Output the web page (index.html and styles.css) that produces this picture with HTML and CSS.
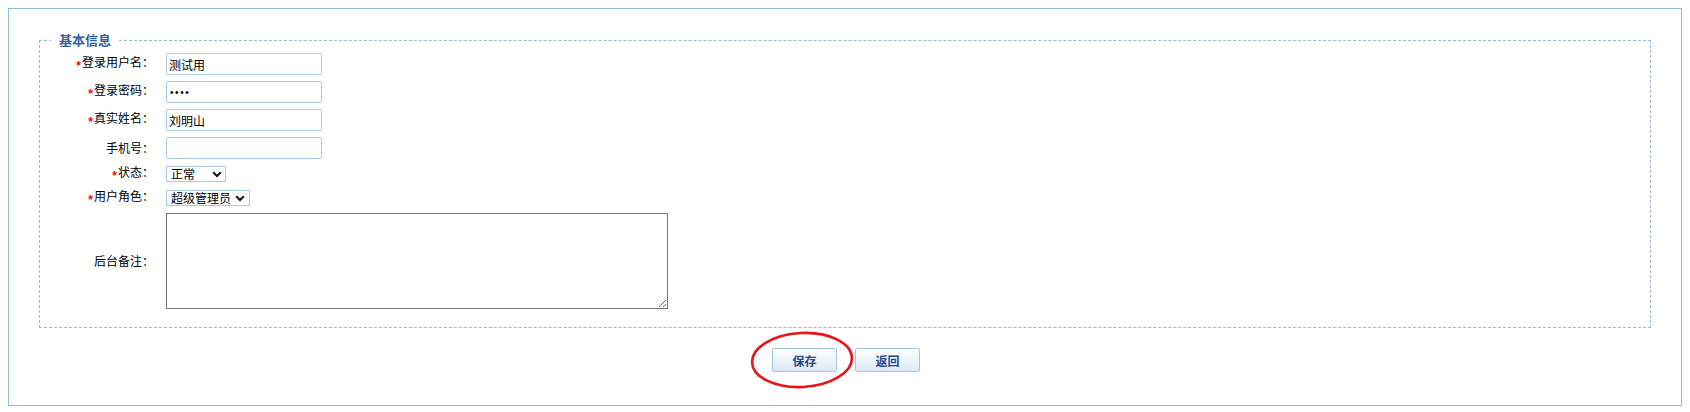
FILE: index.html
```html
<!DOCTYPE html>
<html lang="zh-CN">
<head>
<meta charset="utf-8">
<title>用户编辑</title>
<link rel="stylesheet" href="styles.css">
</head>
<body>
<div class="panel">
  <fieldset class="box">
    <legend class="box-title">基本信息</legend>
    <div class="form">
      <div class="row">
        <label class="lbl"><span class="req">*</span>登录用户名：</label>
        <input class="txt" type="text" value="测试用">
      </div>
      <div class="row">
        <label class="lbl"><span class="req">*</span>登录密码：</label>
        <input class="txt pwd" type="password" value="1234">
      </div>
      <div class="row">
        <label class="lbl"><span class="req">*</span>真实姓名：</label>
        <input class="txt" type="text" value="刘明山">
      </div>
      <div class="row">
        <label class="lbl">手机号：</label>
        <input class="txt" type="text" value="">
      </div>
      <div class="row row-sel">
        <label class="lbl"><span class="req">*</span>状态：</label>
        <span class="sel sel-status">
          <select><option>正常</option><option>禁用</option></select>
          <svg class="chev" width="10" height="7" viewBox="0 0 10 7"><path d="M1.2 1.2 L5 5 L8.8 1.2" fill="none" stroke="#111" stroke-width="2"/></svg>
        </span>
      </div>
      <div class="row row-sel">
        <label class="lbl"><span class="req">*</span>用户角色：</label>
        <span class="sel sel-role">
          <select><option>超级管理员</option><option>普通管理员</option></select>
          <svg class="chev" width="10" height="7" viewBox="0 0 10 7"><path d="M1.2 1.2 L5 5 L8.8 1.2" fill="none" stroke="#111" stroke-width="2"/></svg>
        </span>
      </div>
      <div class="row row-area">
        <label class="lbl">后台备注：</label>
        <textarea class="memo"></textarea>
      </div>
    </div>
  </fieldset>
  <div class="actions">
    <span class="mark">
      <button class="btn" type="button">保存</button>
      <svg class="ring" width="110" height="64" viewBox="0 0 110 64"><ellipse cx="55" cy="32" rx="50" ry="27" fill="none" stroke="#e8141a" stroke-width="2.6" transform="rotate(-3 55 32)"/></svg>
    </span>
    <button class="btn" type="button">返回</button>
  </div>
</div>
</body>
</html>
```
FILE: styles.css
```css
html, body {
  background: #ffffff;
}
body {
  margin: 8px 8px 0;
  font-family: "Noto Sans CJK SC", "Liberation Sans", sans-serif;
  font-size: 12px;
  color: #000;
}
.panel {
  border: 1px solid #8fbbe7;
  height: 398px;
  box-sizing: border-box;
}
.box {
  margin: 23px 30px 0;
  padding: 2px 0 15px;
  border: 1px dashed #98b9e0;
  min-width: 0;
}
.box-title {
  margin-left: 11px;
  padding: 0 8px;
  font-size: 13px;
  line-height: 16px;
  font-weight: bold;
  color: #345f9f;
}
.form {
  display: flex;
  flex-direction: column;
}
.row {
  display: flex;
  align-items: center;
  height: 28px;
}
.row-sel {
  height: 24px;
}
.row-area {
  height: auto;
  padding: 3px 0;
}
.lbl {
  width: 114px;
  margin-right: 12px;
  text-align: right;
  line-height: 16px;
  flex: none;
}
.req {
  color: #ff0000;
  font-family: "Liberation Sans", sans-serif;
  font-weight: bold;
  vertical-align: -3px;
  margin-right: 1px;
}
.txt {
  width: 156px;
  height: 22px;
  box-sizing: border-box;
  border: 1px solid #a9c8ee;
  border-radius: 2px;
  padding: 0 2px;
  font-family: "Noto Sans CJK SC", "Liberation Sans", sans-serif;
  font-size: 12px;
  color: #000;
  background: #fff;
  outline: none;
}
.pwd {
  font-family: "Liberation Sans", sans-serif;
  font-size: 10px;
  letter-spacing: 1.6px;
  padding-left: 3px;
}
.sel {
  position: relative;
  display: inline-block;
  height: 16px;
}
.sel select {
  appearance: none;
  -webkit-appearance: none;
  height: 16px;
  box-sizing: border-box;
  border: 1px solid #a9c7ea;
  border-radius: 0;
  background: #fff;
  padding: 0 0 0 4px;
  margin: 0;
  font-family: "Noto Sans CJK SC", "Liberation Sans", sans-serif;
  font-size: 12px;
  line-height: 14px;
  color: #000;
  display: block;
}
.sel-status select {
  width: 60px;
}
.sel-role select {
  width: 84px;
}
.chev {
  position: absolute;
  top: 5px;
  pointer-events: none;
}
.sel-status .chev {
  left: 46px;
}
.sel-role .chev {
  left: 69px;
}
.memo {
  width: 502px;
  height: 96px;
  box-sizing: border-box;
  border: 1px solid #767676;
  border-radius: 0;
  margin: 0;
  padding: 2px;
  font-family: "Noto Sans CJK SC", "Liberation Sans", sans-serif;
  font-size: 12px;
}
.actions {
  display: flex;
  justify-content: center;
  gap: 18px;
  margin-top: 20px;
  padding-left: 2px;
}
.mark {
  position: relative;
  display: inline-block;
}
.btn {
  width: 65px;
  height: 24px;
  box-sizing: border-box;
  border: 1px solid #a7c3e2;
  border-radius: 2px;
  background: linear-gradient(#ffffff, #dde8f6);
  font-family: "Noto Sans CJK SC", "Liberation Sans", sans-serif;
  font-size: 12px;
  font-weight: bold;
  color: #22498c;
  padding: 0;
  margin: 0;
  display: block;
}
.ring {
  position: absolute;
  left: -25px;
  top: -20px;
  pointer-events: none;
}
```
